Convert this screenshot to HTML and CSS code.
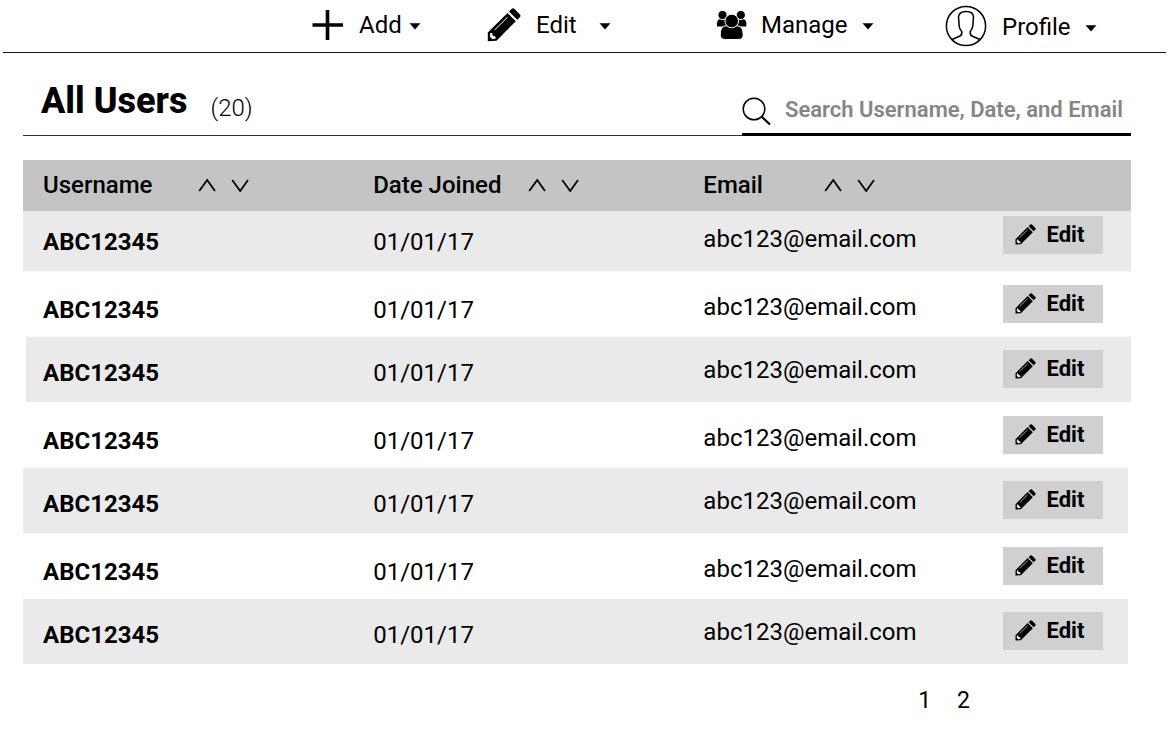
FILE: index.html
```
<!DOCTYPE html>
<html lang="en">
<head>
<meta charset="utf-8">
<title>All Users</title>
<link rel="stylesheet" href="styles.css">
</head>
<body>
<svg class="sprite" width="0" height="0" aria-hidden="true">
  <symbol id="pencil" viewBox="0 0 34 34">
    <path fill="currentColor" d="M.8 24.500 L20.500 5 L28.800 13.200 L9.500 32.800 L.8 33.200 Z"/>
    <path fill="currentColor" d="M22 3.500 L24.800 .8 Q26 -.2 27.300 .8 L33 6.400 Q34 7.800 33 9 L30.300 11.800 Z"/>
    <path class="pencil-cut" d="M7.500 22 L20.500 9.300" fill="none" stroke-width="1"/>
    <path class="pencil-tip" d="M3.200 25 L5.200 25 L5.600 27.600 L8.400 28.400 L8.800 30.600 L5.500 31.200 L2.900 28.800 Z"/>
  </symbol>
  <symbol id="up" viewBox="0 0 18 14"><path d="M1.200 13 L9.200 2 L17 13" fill="none" stroke="currentColor" stroke-width="1.800"/></symbol>
  <symbol id="down" viewBox="0 0 18 14"><path d="M1.200 2 L9.200 13 L17 2" fill="none" stroke="currentColor" stroke-width="1.800"/></symbol>
  <symbol id="caret" viewBox="0 0 12 7"><path d="M.5 .3 H11.500 L6 6.600 Z" fill="currentColor"/></symbol>
</svg>

<nav class="toolbar" aria-label="Main">
  <button class="tool" type="button">
    <svg class="tool-icon" width="32" height="32" viewBox="0 0 32 32"><path d="M15.500 1 V31 M.5 16 H31" fill="none" stroke="currentColor" stroke-width="3.600"/></svg>
    <span class="tool-label">Add</span>
    <svg class="caret caret-near" width="12" height="7"><use href="#caret"/></svg>
  </button>
  <button class="tool" type="button">
    <svg class="tool-icon" width="34" height="34"><use href="#pencil"/></svg>
    <span class="tool-label">Edit</span>
    <svg class="caret caret-far" width="12" height="7"><use href="#caret"/></svg>
  </button>
  <button class="tool" type="button">
    <svg class="tool-icon group-icon" width="32" height="30" viewBox="0 0 32 30">
      <g fill="currentColor" stroke="#fff" stroke-width="1">
        <path d="M.5 17 Q-.3 9 4.500 8.500 L10 9 L11.500 17 Z"/>
        <path d="M30.800 17 Q31.800 9 27 8.500 L21.500 9 L20 17 Z"/>
        <circle cx="6.500" cy="5" r="4.600"/>
        <circle cx="24.800" cy="5" r="4.600"/>
        <path d="M4.200 25 Q4 16 10 15.800 H21.500 Q27.200 16 27.200 25 Q27.200 29.500 22 29.500 H9.500 Q4.200 29.500 4.200 25 Z"/>
        <circle cx="15.700" cy="11" r="6.800"/>
      </g>
    </svg>
    <span class="tool-label">Manage</span>
    <svg class="caret" width="12" height="7"><use href="#caret"/></svg>
  </button>
  <button class="tool tool-profile" type="button">
    <svg class="tool-icon" width="42" height="42" viewBox="0 0 42 42" fill="none" stroke="currentColor" stroke-width="1.500">
      <circle cx="21" cy="21" r="19.600"/>
      <path d="M7 34.500 L14.500 31.300 Q17.300 30 16.800 26.500 Q13.800 23.500 14 18 L13.500 12 Q14 6.500 21 6.500 Q28.200 6.500 28.500 12 L28 18 Q28 23.500 25.200 26.500 Q24.700 30 27.500 31.300 L35 34.500"/>
    </svg>
    <span class="tool-label">Profile</span>
    <svg class="caret" width="12" height="7"><use href="#caret"/></svg>
  </button>
</nav>

<main class="page">
  <header class="heading">
    <h1 class="title">All Users</h1>
    <span class="count">(20)</span>
    <label class="search">
      <svg width="29" height="29" viewBox="0 0 29 29" fill="none" stroke="currentColor" role="img" aria-label="Search"><circle cx="12" cy="12" r="10.800" stroke-width="1.500"/><path d="M19.500 19.500 L28 27.500" stroke-width="2.200"/></svg>
      <input class="search-input" type="text" placeholder="Search Username, Date, and Email">
    </label>
  </header>

  <table class="users">
    <colgroup><col class="col-name"><col class="col-date"><col class="col-email"><col></colgroup>
    <thead>
      <tr>
        <th scope="col"><div class="column-head"><span class="column-label">Username</span><button class="sort" type="button" aria-label="Sort username ascending"><svg width="18" height="14"><use href="#up"/></svg></button><button class="sort" type="button" aria-label="Sort username descending"><svg width="18" height="14"><use href="#down"/></svg></button></div></th>
        <th scope="col"><div class="column-head"><span class="column-label">Date Joined</span><button class="sort" type="button" aria-label="Sort date ascending"><svg width="18" height="14"><use href="#up"/></svg></button><button class="sort" type="button" aria-label="Sort date descending"><svg width="18" height="14"><use href="#down"/></svg></button></div></th>
        <th scope="col"><div class="column-head"><span class="column-label column-label-short">Email</span><button class="sort" type="button" aria-label="Sort email ascending"><svg width="18" height="14"><use href="#up"/></svg></button><button class="sort" type="button" aria-label="Sort email descending"><svg width="18" height="14"><use href="#down"/></svg></button></div></th>
        <td></td>
      </tr>
    </thead>
    <tbody>
      <tr class="row-first"><td class="name">ABC12345</td><td>01/01/17</td><td class="email">abc123@email.com</td><td class="action"><button class="edit" type="button"><svg width="21" height="21"><use href="#pencil"/></svg>Edit</button></td></tr>
      <tr><td class="name">ABC12345</td><td>01/01/17</td><td class="email">abc123@email.com</td><td class="action"><button class="edit" type="button"><svg width="21" height="21"><use href="#pencil"/></svg>Edit</button></td></tr>
      <tr class="inset-left"><td class="name">ABC12345</td><td>01/01/17</td><td class="email">abc123@email.com</td><td class="action"><button class="edit" type="button"><svg width="21" height="21"><use href="#pencil"/></svg>Edit</button></td></tr>
      <tr><td class="name">ABC12345</td><td>01/01/17</td><td class="email">abc123@email.com</td><td class="action"><button class="edit" type="button"><svg width="21" height="21"><use href="#pencil"/></svg>Edit</button></td></tr>
      <tr class="inset-right"><td class="name">ABC12345</td><td>01/01/17</td><td class="email">abc123@email.com</td><td class="action"><button class="edit" type="button"><svg width="21" height="21"><use href="#pencil"/></svg>Edit</button></td></tr>
      <tr><td class="name">ABC12345</td><td>01/01/17</td><td class="email">abc123@email.com</td><td class="action"><button class="edit" type="button"><svg width="21" height="21"><use href="#pencil"/></svg>Edit</button></td></tr>
      <tr class="inset-right"><td class="name">ABC12345</td><td>01/01/17</td><td class="email">abc123@email.com</td><td class="action"><button class="edit" type="button"><svg width="21" height="21"><use href="#pencil"/></svg>Edit</button></td></tr>
    </tbody>
  </table>

  <nav class="pages" aria-label="Pages"><a class="page-link" href="#1">1</a><a class="page-link" href="#2">2</a></nav>
</main>
</body>
</html>
```
FILE: styles.css
```
* { box-sizing: border-box; }

body {
  margin: 0;
  background: #fff;
  color: #000;
  font: 24px/28px Roboto, sans-serif;
}

button {
  padding: 0;
  border: 0;
  background: none;
  color: inherit;
  font: inherit;
  cursor: pointer;
}

svg { display: block; flex: none; }
.sprite { position: absolute; }

.pencil-cut { stroke: #fff; }
.pencil-tip { fill: #fff; }

/* Toolbar */
.toolbar {
  display: grid;
  grid-template-columns: 309fr 175fr 229fr 229fr 221fr;
  margin: 0 5px 0 3px;
  height: 53px;
  border-bottom: 1px solid #111;
}
.tool {
  display: flex;
  align-items: center;
  justify-self: start;
  height: 50px;
}
.tool:first-child { grid-column: 2; }
.tool-label { margin: 0 14px 0 15px; }
.tool-profile { height: 54px; }
.tool-profile .tool-icon { margin-bottom: 3px; }
.group-icon { margin-right: -2px; }
.caret { margin-top: 2px; }
.caret-near { margin-left: -7px; }
.caret-far { margin-left: 8px; }

/* Heading */
.page { padding: 0 40px 0 23px; }
.heading {
  display: flex;
  align-items: flex-end;
  margin-top: 26px;
  height: 57px;
  padding-left: 18px;
  border-bottom: 1px solid #333;
}
.title {
  margin: 0 0 13px;
  font-size: 36px;
  line-height: 42px;
  font-weight: 800;
}
.count { margin: 0 0 13px 23px; font-weight: 300; }
.search {
  display: flex;
  align-items: center;
  gap: 14px;
  width: 389px;
  height: 44px;
  margin: 0 0 -1px auto;
  padding-bottom: 3px;
  border-bottom: 3px solid #000;
}
.search-input {
  flex: 1;
  min-width: 0;
  height: 32px;
  padding: 0 0 3px;
  border: 0;
  outline: 0;
  background: none;
  color: #000;
  font: 600 22px/28px Roboto, sans-serif;
}
.search-input::placeholder { color: #858585; opacity: 1; }

/* Table */
.users {
  width: 100%;
  margin-top: 24px;
  table-layout: fixed;
  border-collapse: separate;
  border-spacing: 0;
}
.col-name { width: 29.8%; }
.col-date { width: 29.8%; }
.col-email { width: 27%; }

thead tr { height: 51px; background: #c4c4c4; }
th { padding: 0 0 2px 20px; font-weight: 500; text-align: left; }
.column-head { display: flex; align-items: center; }
.column-label { min-width: 155px; }
.column-label-short { min-width: 121px; }
.sort { padding-right: 15px; }

tbody tr { height: 65px; }
tbody tr:nth-child(even) { height: 66px; }
tbody tr:nth-child(odd) { background: #eaeaea; }
tbody tr.row-first { height: 60px; }
tbody td { padding: 22px 0 0 20px; vertical-align: top; }
tbody tr:nth-child(even) td { padding-top: 25px; }
tbody .row-first td { padding-top: 17px; }
tbody td.email { padding-top: 19px; }
tbody tr:nth-child(even) td.email { padding-top: 22px; }
tbody .row-first td.email { padding-top: 14px; }
tbody td.action { padding-top: 13px; }
tbody tr:nth-child(even) td.action { padding-top: 14px; }
tbody .row-first td.action { padding-top: 5px; }
.name { font-weight: 700; }

.inset-left .name { padding-left: 17px; border-left: 3px solid #fff; }
.inset-right .action { border-right: 3px solid #fff; }

.edit {
  display: flex;
  align-items: center;
  gap: 11px;
  width: 100px;
  height: 38px;
  padding-left: 12px;
  background: #d0d0d0;
  font-size: 22px;
  font-weight: 700;
}
.edit svg { margin-bottom: 2px; }

/* Pagination */
.pages {
  display: flex;
  justify-content: flex-end;
  gap: 26px;
  margin: 23px 161px 0 0;
  font-size: 23px;
}
.page-link { color: inherit; text-decoration: none; }
```
